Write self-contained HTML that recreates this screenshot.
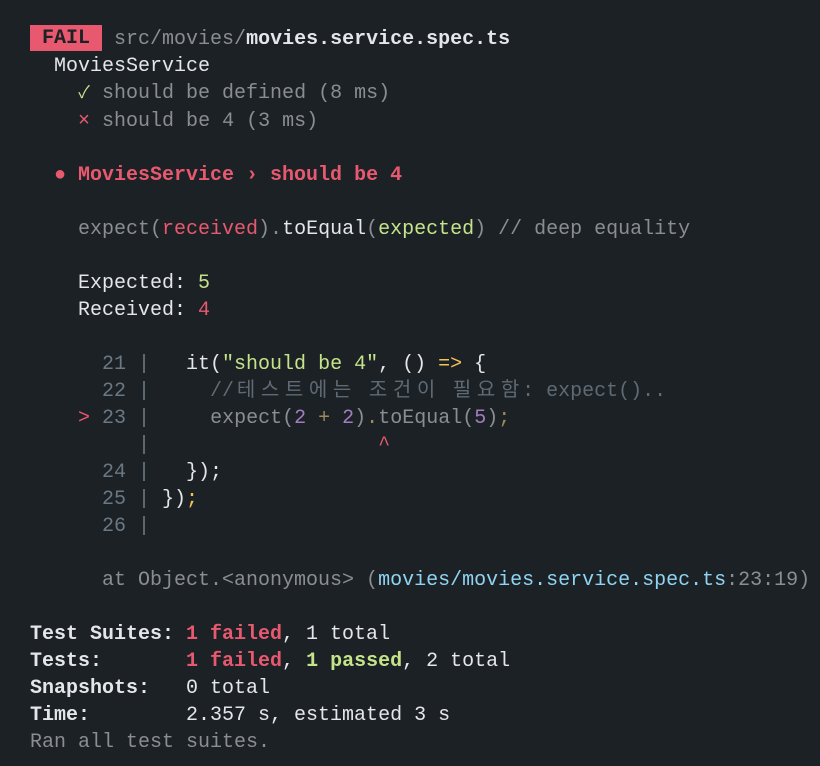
<!DOCTYPE html>
<html><head><meta charset="utf-8"><style>
html,body{margin:0;padding:0;background:#1c2126;width:820px;height:766px;overflow:hidden}
pre{margin:0;padding:26px 0 0 30px;font-family:"Liberation Mono","Noto Sans CJK KR",monospace;font-size:20px;line-height:27px;color:#e4e6e8;white-space:pre}
.g{color:#8a8e92}.r{color:#e8596f}.gr{color:#c5e48a}.b{font-weight:bold}
.badge{background:#e8596f;color:#1c2126;font-weight:bold;display:inline-block;height:26px;line-height:27px;vertical-align:top;margin-top:-1px}
.ln{color:#6b7882}.cm{color:#5f6a73}.pu{color:#a47dc0}.y{color:#f4c257}.dy{color:#9e8a5a}.cy{color:#8fd4f2}
.k{display:inline-block;width:24px;text-align:center}
.c{display:inline-block;width:12px;text-align:center;overflow:visible;font-size:17px}
</style></head><body><pre><span class="badge"> FAIL </span> <span class="g">src/movies/</span><span class="b">movies.service.spec.ts</span>
  MoviesService
    <span class="gr c">✓</span> <span class="g">should be defined (8 ms)</span>
    <span class="r">×</span> <span class="g">should be 4 (3 ms)</span>

  <span class="r b">● MoviesService › should be 4</span>

    <span class="g">expect(</span><span class="r">received</span><span class="g">).</span>toEqual<span class="g">(</span><span class="gr">expected</span><span class="g">) // deep equality</span>

    Expected: <span class="gr">5</span>
    Received: <span class="r">4</span>

<span class="ln">      21 |</span>   it(<span class="gr">"should be 4"</span>, () <span class="y">=&gt;</span> {
<span class="ln">      22 |</span>     <span class="cm">//<span class="k">테</span><span class="k">스</span><span class="k">트</span><span class="k">에</span><span class="k">는</span> <span class="k">조</span><span class="k">건</span><span class="k">이</span> <span class="k">필</span><span class="k">요</span><span class="k">함</span>: expect()..</span>
<span class="r">    &gt;</span> <span class="ln">23 |</span>     <span class="g">expect(</span><span class="pu">2</span> <span class="dy">+</span> <span class="pu">2</span><span class="g">)</span><span class="dy">.</span><span class="g">toEqual(</span><span class="pu">5</span><span class="g">)</span><span class="dy">;</span>
<span class="ln">         |</span>                   <span class="r">^</span>
<span class="ln">      24 |</span>   });
<span class="ln">      25 |</span> })<span class="y">;</span>
<span class="ln">      26 |</span>

<span class="g">      at Object.&lt;anonymous&gt; (</span><span class="cy">movies/movies.service.spec.ts</span><span class="g">:23:19)</span>

<span class="b">Test Suites: </span><span class="r b">1 failed</span>, 1 total
<span class="b">Tests:       </span><span class="r b">1 failed</span>, <span class="gr b">1 passed</span>, 2 total
<span class="b">Snapshots:   </span>0 total
<span class="b">Time:        </span>2.357 s, estimated 3 s
<span class="g">Ran all test suites.</span></pre></body></html>
